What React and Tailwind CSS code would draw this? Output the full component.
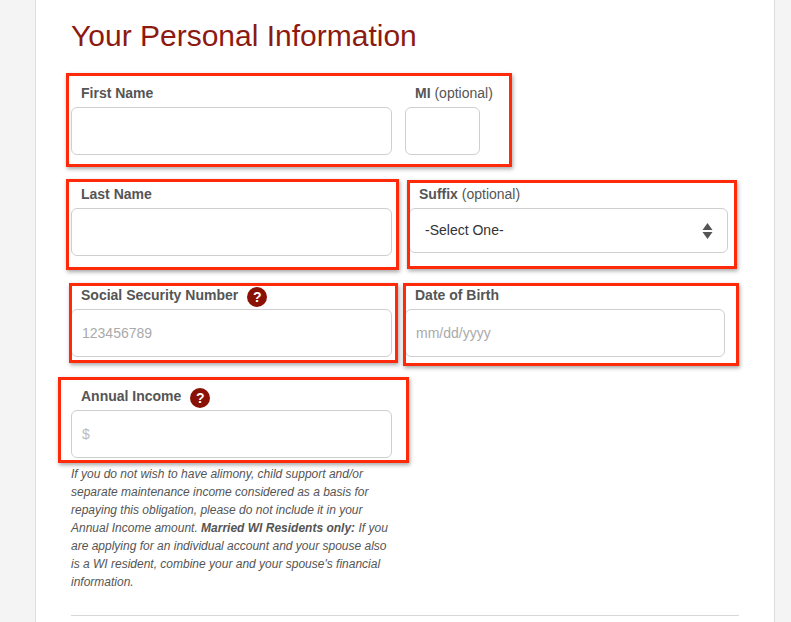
import React from 'react'

function Frame({ className }) {
  return (
    <div
      className={`pointer-events-none absolute border-[3px] border-[#ff2a0a] shadow-[1px_2px_4px_rgba(0,0,0,0.35)] ${className}`}
    />
  )
}

function Help() {
  return (
    <span className="ml-[9px] inline-flex h-[20px] w-[20px] items-center justify-center rounded-full bg-[#8a1204] text-[14px] font-bold leading-none text-white">
      ?
    </span>
  )
}

function Label({ children, className = '' }) {
  return (
    <div className={`flex h-[22px] items-start pl-[10px] text-[14px] leading-[16px] text-[#555] ${className}`}>
      {children}
    </div>
  )
}

function Input({ placeholder, className = '' }) {
  return (
    <div
      className={`flex h-[48px] items-center rounded-[6px] border border-[#cfcfcf] bg-white pl-[10px] text-[14px] text-[#aaa] ${className}`}
    >
      {placeholder}
    </div>
  )
}

export default function App() {
  return (
    <div className="flex min-h-[622px] bg-[#f4f4f4] font-[Liberation_Sans,Arial,sans-serif]">
      <div className="ml-[35px] w-[740px] overflow-hidden border-x border-[#dedede] bg-white pl-[35px] pr-[35px]">
        <h1 className="mt-[17px] text-[30px] leading-[38px] text-[#8c1a10]">Your Personal Information</h1>

        <div className="relative mt-[30px] flex w-[409px]">
          <Frame className="-left-[5px] -right-[32px] -top-[12px] -bottom-[12px]" />
          <div className="w-[321px]">
            <Label className="font-bold">First Name</Label>
            <Input />
          </div>
          <div className="ml-[13px] w-[75px]">
            <div className="h-[22px] whitespace-nowrap pl-[10px] text-[14px] leading-[16px] text-[#555]">
              <b>MI</b> (optional)
            </div>
            <Input />
          </div>
        </div>

        <div className="mt-[31px] flex">
          <div className="relative w-[321px]">
            <Frame className="-left-[5px] -right-[7px] -top-[7px] -bottom-[14px]" />
            <Label className="font-bold">Last Name</Label>
            <Input />
          </div>
          <div className="relative ml-[17px] w-[319px]">
            <Frame className="-left-[2px] -right-[9px] -top-[6px] -bottom-[13px]" />
            <Label>
              <b>Suffix</b>&nbsp;(optional)
            </Label>
            <div className="flex h-[45px] items-center justify-between rounded-[6px] border border-[#cfcfcf] bg-white pl-[15px] pr-[14px] text-[14px] text-[#333]">
              -Select One-
              <svg width="11" height="18" viewBox="0 0 11 18">
                <path d="M5.5 1L10.5 8H0.5Z" fill="#555" />
                <path d="M5.5 17L10.5 10H0.5Z" fill="#555" />
              </svg>
            </div>
          </div>
        </div>

        <div className="mt-[31px] flex">
          <div className="relative w-[321px]">
            <Frame className="-left-[2px] -right-[6px] -top-[4px] -bottom-[6px]" />
            <Label className="items-center font-bold">
              Social Security Number <Help />
            </Label>
            <Input placeholder="123456789" />
          </div>
          <div className="relative ml-[13px] w-[320px]">
            <Frame className="-left-[2px] -right-[14px] -top-[4px] -bottom-[9px]" />
            <Label className="font-bold">Date of Birth</Label>
            <Input placeholder="mm/dd/yyyy" className="h-[47px]" />
          </div>
        </div>

        <div className="relative mt-[31px] w-[321px]">
          <Frame className="-left-[13px] -right-[17px] -top-[11px] -bottom-[5px]" />
          <Label className="items-center font-bold">
            Annual Income <Help />
          </Label>
          <Input placeholder="$" className="pl-[7px] text-[#bbb]" />
        </div>

        <p className="mt-[7px] w-[325px] text-[12px] italic leading-[18px] text-[#555]">
          If you do not wish to have alimony, child support and/or separate maintenance income considered as a basis for
          repaying this obligation, please do not include it in your Annual Income amount.{' '}
          <b>Married WI Residents only:</b> If you are applying for an individual account and your spouse also is a WI
          resident, combine your and your spouse's financial information.
        </p>

        <div className="mt-[24px] h-px w-[668px] bg-[#d8d8d8]" />
      </div>
    </div>
  )
}
